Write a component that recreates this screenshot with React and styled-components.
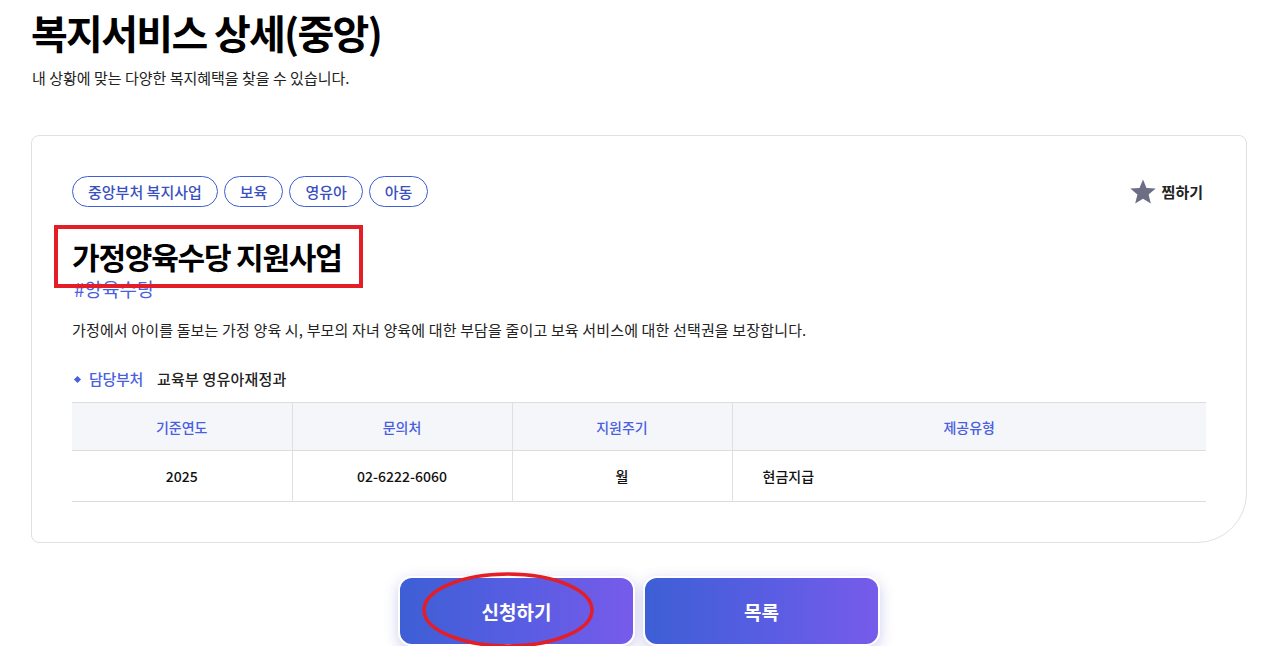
import React from "react";
import styled, {createGlobalStyle} from "styled-components";

const GlobalStyle = createGlobalStyle`
  body {
    margin: 0;
    background: #fff;
    font-family: "Noto Sans CJK KR", "Noto Sans", sans-serif;
    color: #111;
  }
`;

const tags = ["중앙부처 복지사업", "보육", "영유아", "아동"];
const heads = ["기준연도", "문의처", "지원주기", "제공유형"];
const cells = ["2025", "02-6222-6060", "월", "현금지급"];

const App = () => {
  return (
    <Page>
      <GlobalStyle />
      <H1>복지서비스 상세(중앙)</H1>
      <Sub>내 상황에 맞는 다양한 복지혜택을 찾을 수 있습니다.</Sub>
      <Card>
        <TopRow>
          <Tags>
            {tags.map((t) => (
              <Tag key={t}>{t}</Tag>
            ))}
          </Tags>
          <Zzim>
            <svg width="28" height="28" viewBox="0 0 24 24">
              <path
                d="M12 1.2l3 7.3 7.9.6-6.1 5.1 1.9 7.7L12 17.7l-6.7 4.2 1.9-7.7-6.1-5.1 7.9-.6z"
                fill="#6b6e85"
              />
            </svg>
            찜하기
          </Zzim>
        </TopRow>
        <TitleWrap>
          <H2>가정양육수당 지원사업</H2>
          <RedBox />
        </TitleWrap>
        <Hash>#양육수당</Hash>
        <Desc>
          가정에서 아이를 돌보는 가정 양육 시, 부모의 자녀 양육에 대한 부담을 줄이고 보육 서비스에 대한 선택권을 보장합니다.
        </Desc>
        <Dept>
          <Diamond />
          <DeptLabel>담당부처</DeptLabel>
          <DeptValue>교육부 영유아재정과</DeptValue>
        </Dept>
        <Table>
          <colgroup>
            <col width="220" />
            <col width="220" />
            <col width="220" />
            <col />
          </colgroup>
          <thead>
            <tr>
              {heads.map((h) => (
                <Th key={h}>{h}</Th>
              ))}
            </tr>
          </thead>
          <tbody>
            <tr>
              {cells.map((c, i) => (
                <Td key={c} $left={i === 3}>
                  {c}
                </Td>
              ))}
            </tr>
          </tbody>
        </Table>
      </Card>
      <Buttons>
        <BtnWrap>
          <Button>신청하기</Button>
          <Ellipse viewBox="0 0 176 80">
            <ellipse cx="88" cy="40" rx="84" ry="36" fill="none" stroke="#e41e26" strokeWidth="3.5" />
          </Ellipse>
        </BtnWrap>
        <Button>목록</Button>
      </Buttons>
    </Page>
  );
};

const Page = styled.div`
  width: 1216px;
  padding: 0 0 0 31px;
`;

const H1 = styled.h1`
  margin: 0;
  padding-top: 3px;
  font-size: 40px;
  font-weight: 700;
  line-height: 58px;
  letter-spacing: -1.7px;
  color: #000;
`;

const Sub = styled.p`
  margin: 7px 0 0 1px;
  font-size: 15px;
  line-height: 20px;
  color: #222;
`;

const Card = styled.div`
  margin-top: 47px;
  box-sizing: border-box;
  width: 1216px;
  height: 408px;
  border: 1px solid #e0e0e0;
  border-radius: 8px 8px 50px 8px;
  padding: 40px 40px 0 40px;
`;

const TopRow = styled.div`
  display: flex;
  justify-content: space-between;
  align-items: center;
`;

const Tags = styled.div`
  display: flex;
  gap: 6px;
`;

const Tag = styled.span`
  display: inline-flex;
  align-items: center;
  height: 31px;
  box-sizing: border-box;
  padding: 0 15px;
  border: 1px solid #3e5ed6;
  border-radius: 16px;
  font-size: 15px;
  font-weight: 500;
  color: #3a50c0;
`;

const Zzim = styled.div`
  display: flex;
  align-items: center;
  gap: 5px;
  margin-right: 3px;
  font-size: 15px;
  font-weight: 700;
  color: #222;
`;

const TitleWrap = styled.div`
  position: relative;
  margin-top: 27px;
  display: inline-block;
`;

const H2 = styled.h2`
  margin: 0;
  font-size: 30px;
  font-weight: 700;
  line-height: 44px;
  letter-spacing: -1.2px;
  color: #000;
`;

const RedBox = styled.div`
  position: absolute;
  left: -18px;
  top: -9px;
  width: 309px;
  height: 63px;
  box-sizing: border-box;
  border: 4px solid #e41e26;
  z-index: 2;
`;

const Hash = styled.div`
  margin-top: 0px;
  font-size: 19px;
  line-height: 22px;
  color: #4a5fe0;
  padding-left: 2px;
`;

const Desc = styled.p`
  margin: 19px 0 0 0;
  font-size: 15px;
  line-height: 22px;
  letter-spacing: 0.15px;
  color: #222;
`;

const Dept = styled.div`
  margin-top: 27px;
  display: flex;
  align-items: center;
  font-size: 15px;
  font-weight: 500;
  line-height: 22px;
`;

const Diamond = styled.span`
  width: 5px;
  height: 5px;
  background: #4a5fe0;
  transform: rotate(45deg);
  margin: 0 9px 0 3px;
`;

const DeptLabel = styled.span`
  color: #4a5fe0;
  margin-right: 14px;
  letter-spacing: -0.3px;
`;

const DeptValue = styled.span`
  color: #222;
  letter-spacing: 0.2px;
`;

const Table = styled.table`
  margin-top: 12px;
  width: 100%;
  border-collapse: collapse;
  table-layout: fixed;
  border-top: 1px solid #dcdcdc;
  border-bottom: 1px solid #dcdcdc;
`;

const Th = styled.th`
  height: 47px;
  padding: 0;
  background: #f5f6fa;
  font-size: 14px;
  font-weight: 500;
  color: #4a5fe0;
  border-left: 1px solid #e0e0e0;
  border-bottom: 1px solid #dcdcdc;
  &:first-child {
    border-left: none;
  }
`;

const Td = styled.td`
  height: 50px;
  padding: 0;
  font-size: 14px;
  font-weight: 500;
  color: #111;
  text-align: ${(p) => (p.$left ? "left" : "center")};
  padding-left: ${(p) => (p.$left ? "30px" : "0")};
  border-left: 1px solid #e0e0e0;
  &:first-child {
    border-left: none;
  }
`;

const Buttons = styled.div`
  margin-top: 33px;
  display: flex;
  justify-content: center;
  gap: 8px;
`;

const BtnWrap = styled.div`
  position: relative;
`;

const Button = styled.button`
  width: 237px;
  height: 70px;
  border: 2px solid #fff;
  border-radius: 14px;
  background: linear-gradient(90deg, #3d5fd5 0%, #5a5de3 55%, #775bea 100%);
  box-shadow: 0 4px 14px rgba(90, 90, 200, 0.3);
  font-family: "Noto Sans CJK KR", sans-serif;
  font-size: 19px;
  font-weight: 700;
  color: #fff;
`;

const Ellipse = styled.svg`
  position: absolute;
  left: 22px;
  top: -6px;
  width: 176px;
  height: 80px;
  pointer-events: none;
`;

export default App;
